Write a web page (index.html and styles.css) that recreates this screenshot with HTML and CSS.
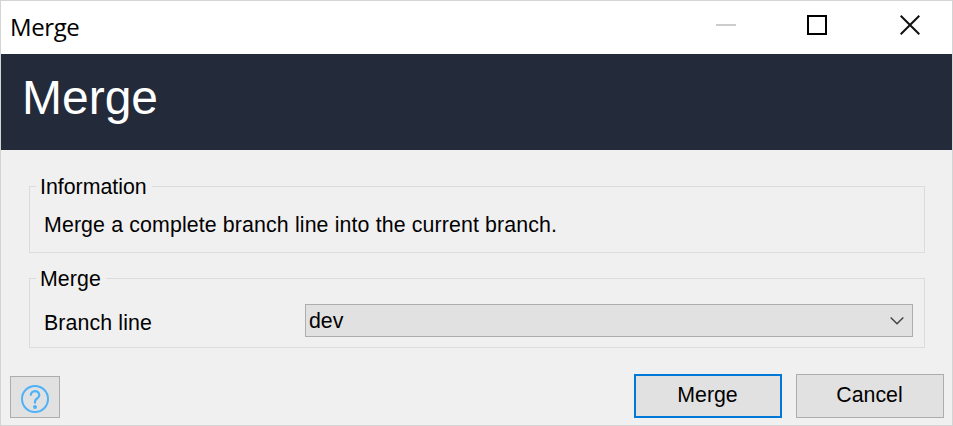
FILE: index.html
```html
<!DOCTYPE html>
<html lang="en">
<head>
<meta charset="utf-8">
<title>Merge</title>
<link rel="stylesheet" href="styles.css">
</head>
<body>
<main class="window">
  <header class="titlebar">
    <span class="caption">Merge</span>
    <div class="controls">
      <svg class="control" width="20" height="20" viewBox="0 0 20 20"><path d="M0 10H20" stroke="#ccc" stroke-width="2"/></svg>
      <svg class="control" width="20" height="20" viewBox="0 0 20 20"><path d="M1 1H19V19H1Z" fill="none" stroke="#000" stroke-width="2"/></svg>
      <svg class="control" width="20" height="20" viewBox="0 0 20 20"><path d="M.7 .7L19.3 19.3M19.3 .7L.7 19.3" stroke="#111" stroke-width="2"/></svg>
    </div>
  </header>
  <h1 class="banner">Merge</h1>
  <form class="content">
    <fieldset class="group info">
      <legend>Information</legend>
      <p>Merge a complete branch line into the current branch.</p>
    </fieldset>
    <fieldset class="group branch">
      <legend>Merge</legend>
      <div class="row">
        <span class="label">Branch line</span>
        <div class="select">
          <span>dev</span>
          <svg width="14" height="9" viewBox="0 0 14 9"><path d="M.7 1.5L7 7.8L13.3 1.5" fill="none" stroke="#444" stroke-width="1.5"/></svg>
        </div>
      </div>
    </fieldset>
  </form>
  <footer class="actions">
    <button class="button help" type="button" aria-label="Help">
      <svg width="28" height="28" viewBox="0 0 28 28" fill="none" stroke="#4db2f8"><circle cx="14" cy="14" r="13" stroke-width="2"/><path d="M9.8 10.6C9.6 4.6 18.3 4.6 18.3 10.2C18.3 13.6 14 13.4 14 16.5V18.6" stroke-width="2.2"/><circle cx="14" cy="22" r="2" fill="#4db2f8" stroke="none"/></svg>
    </button>
    <button class="button primary" type="button">Merge</button>
    <button class="button" type="button">Cancel</button>
  </footer>
</main>
</body>
</html>
```

FILE: styles.css
```css
* { box-sizing: border-box; }

body {
  margin: 0;
  font: 21.33px/24px "Liberation Sans", Arial, sans-serif;
  color: #000;
}

.window {
  display: flex;
  flex-direction: column;
  width: 953px;
  height: 426px;
  border: 1px solid #d4d4d4;
  background: #f0f0f0;
}

.titlebar {
  display: flex;
  justify-content: space-between;
  height: 53px;
  padding: 0 32px 0 9px;
  background: #fff;
}

.caption {
  font: 24px/52px "Open Sans", sans-serif;
  letter-spacing: -.4px;
}

.controls {
  display: flex;
  gap: 71px;
  padding-top: 14px;
}

.control { display: block; }
.control:last-child { margin-left: 2px; }

.banner {
  height: 96px;
  margin: 0;
  padding: 0 21px;
  background: #232a3a;
  color: #fff;
  font-size: 48px;
  font-weight: 400;
  line-height: 88px;
}

.content { padding: 24px 27px 0 28px; }

.group {
  min-width: 0;
  margin: 0;
  padding: 0;
  border: 1px solid #dcdcdc;
}

.group legend {
  margin-left: 6px;
  padding: 2px 5px 0 4px;
  line-height: 22px;
}

.info { height: 79px; }

.info p {
  margin: 15px 0 0 14px;
  letter-spacing: .13px;
}

.branch {
  height: 82px;
  margin-top: 13px;
}

.branch legend { letter-spacing: .1px; }

.row {
  display: flex;
  align-items: center;
  justify-content: space-between;
  margin-top: 14px;
  padding: 0 11px 0 14px;
}

.label {
  padding-top: 4px;
  letter-spacing: .12px;
}

.select {
  display: flex;
  align-items: center;
  justify-content: space-between;
  width: 608px;
  height: 33px;
  padding: 0 8px 0 3px;
  border: 1px solid #adadad;
  background: #e1e1e1;
}

.actions {
  display: flex;
  align-items: flex-end;
  gap: 14px;
  height: 44px;
  margin-top: auto;
  margin-bottom: 7px;
  padding: 0 8px 0 9px;
}

.button {
  width: 148px;
  height: 44px;
  padding: 0 1px 2px 0;
  border: 1px solid #adadad;
  background: #e1e1e1;
  color: #000;
  font: inherit;
}

.primary { border: 2px solid #0078d7; }

.help {
  display: flex;
  align-items: center;
  justify-content: center;
  width: 50px;
  height: 42px;
  margin-right: auto;
  padding: 4px 0 0;
}
```
